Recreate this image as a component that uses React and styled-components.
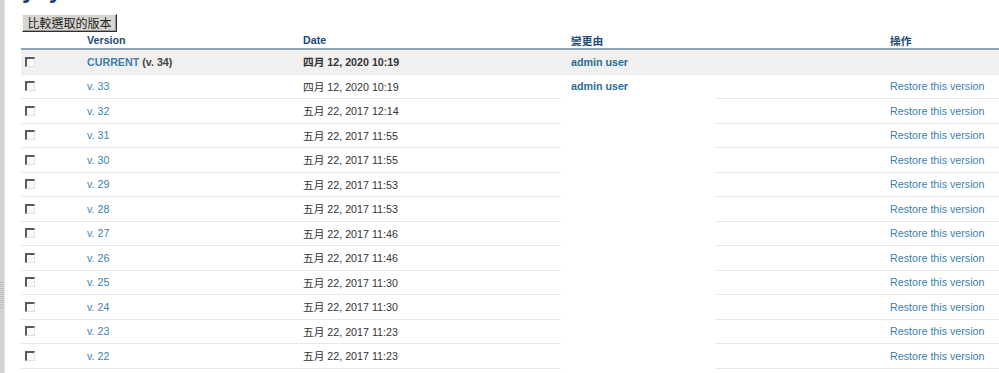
import React from "react";
import styled, { createGlobalStyle } from "styled-components";

const Global = createGlobalStyle`
  html, body { margin: 0; padding: 0; background: #fff; }
  body { font-family: "Liberation Sans", Arial, "Noto Sans CJK TC", sans-serif; }
`;

const Page = styled.div`
  display: flex;
  min-height: 373px;
  overflow: hidden;
`;

const Sidebar = styled.div`
  width: 4px;
  flex: none;
  background: #d2d2d2;
  display: flex;
  flex-direction: column;
  border-right: 1px solid #e6e6e6;
`;

const Grip = styled.div`
  height: 28px;
  margin-top: 282px;
  background: repeating-linear-gradient(#bdbdbd 0 1px, #d8d8d8 1px 2px);
`;

const Main = styled.div`
  flex: 1;
  padding-left: 16px;
  display: flex;
  flex-direction: column;
`;

const HeadingClip = styled.div`
  height: 3px;
  flex: none;
  overflow: hidden;
  display: flex;
  align-items: flex-end;
`;

const Heading = styled.h1`
  margin: 0;
  font-size: 24px;
  line-height: 26px;
  font-weight: bold;
  color: #1c3f6e;
  padding-left: 1px;
  white-space: nowrap;
`;

const CompareButton = styled.button`
  margin: 11px 0 0 1px;
  align-self: flex-start;
  height: 18px;
  width: 95px;
  padding: 0 0 1px;
  background: #d8d5d0;
  border: 1px solid;
  border-color: #f4f4f4 #303030 #303030 #f4f4f4;
  box-shadow: inset -1px -1px 0 #9a9a9a;
  font-family: "Noto Sans CJK TC", sans-serif;
  font-size: 12px;
  line-height: 15px;
  color: #222;
`;

const Table = styled.table`
  width: 980px;
  border-collapse: collapse;
  table-layout: fixed;
  font-size: 10.7px;
`;

const HeadCell = styled.th`
  text-align: left;
  font-weight: bold;
  color: #1d4a78;
  padding: 0 10px;
  height: 16px;
  vertical-align: middle;
  border-bottom: 2px solid #8ea3b8;
  font-family: "Liberation Sans", Arial, "Noto Sans CJK TC", sans-serif;
`;

const Row = styled.tr`
  background: ${(p) => (p.$current ? "#f0f0f0" : "#fff")};
  font-weight: ${(p) => (p.$current ? "bold" : "normal")};
`;

const Cell = styled.td`
  height: 23.5px;
  padding: 0 10px;
  vertical-align: middle;
  color: #333;
  border-bottom: 1px solid #e8e8e8;
  white-space: nowrap;
  font-family: "Liberation Sans", Arial, "Noto Sans CJK TC", sans-serif;
`;

const CheckCell = styled(Cell)`
  padding: 0 0 0 4px;
`;

const AuthorCell = styled(Cell)`
  vertical-align: top;
  border-bottom: none;
  background: #fff;
  padding-top: 5px;
`;

const Check = styled.span`
  display: block;
  width: 10px;
  height: 10px;
  box-sizing: border-box;
  border-top: 2px solid #5a5a5a;
  border-left: 2px solid #5a5a5a;
  border-right: 1px solid #e0e0e0;
  border-bottom: 1px solid #e0e0e0;
  background: #fafafa;
`;

const Link = styled.a`
  color: ${(p) => (p.$strong ? "#2a6d99" : "#3b7fae")};
  font-weight: ${(p) => (p.$strong ? "bold" : "inherit")};
  text-decoration: none;
`;

const Muted = styled.span`
  color: #444;
`;

const rows = [
  ["v. 33", "四月 12, 2020 10:19"],
  ["v. 32", "五月 22, 2017 12:14"],
  ["v. 31", "五月 22, 2017 11:55"],
  ["v. 30", "五月 22, 2017 11:55"],
  ["v. 29", "五月 22, 2017 11:53"],
  ["v. 28", "五月 22, 2017 11:53"],
  ["v. 27", "五月 22, 2017 11:46"],
  ["v. 26", "五月 22, 2017 11:46"],
  ["v. 25", "五月 22, 2017 11:30"],
  ["v. 24", "五月 22, 2017 11:30"],
  ["v. 23", "五月 22, 2017 11:23"],
  ["v. 22", "五月 22, 2017 11:23"],
];

export default function App() {
  return (
    <>
      <Global />
      <Page>
        <Sidebar>
          <Grip />
        </Sidebar>
        <Main>
          <HeadingClip aria-hidden="true">
            <Heading>yay</Heading>
          </HeadingClip>
          <CompareButton type="button">比較選取的版本</CompareButton>
          <Table>
            <colgroup>
              <col style={{ width: 56 }} />
              <col style={{ width: 216 }} />
              <col style={{ width: 268 }} />
              <col style={{ width: 154 }} />
              <col style={{ width: 165 }} />
              <col style={{ width: 121 }} />
            </colgroup>
            <thead>
              <tr>
                <HeadCell />
                <HeadCell>Version</HeadCell>
                <HeadCell>Date</HeadCell>
                <HeadCell>變更由</HeadCell>
                <HeadCell />
                <HeadCell>操作</HeadCell>
              </tr>
            </thead>
            <tbody>
              <Row $current>
                <CheckCell><Check /></CheckCell>
                <Cell>
                  <Link href="#">CURRENT</Link> <Muted>(v. 34)</Muted>
                </Cell>
                <Cell>四月 12, 2020 10:19</Cell>
                <Cell><Link href="#" $strong>admin user</Link></Cell>
                <Cell />
                <Cell />
              </Row>
              {rows.map(([v, d], i) => (
                <Row key={v}>
                  <CheckCell><Check /></CheckCell>
                  <Cell><Link href="#">{v}</Link></Cell>
                  <Cell>{d}</Cell>
                  {i === 0 && (
                    <AuthorCell rowSpan={rows.length}>
                      <Link href="#" $strong>admin user</Link>
                    </AuthorCell>
                  )}
                  <Cell />
                  <Cell><Link href="#">Restore this version</Link></Cell>
                </Row>
              ))}
            </tbody>
          </Table>
        </Main>
      </Page>
    </>
  );
}
